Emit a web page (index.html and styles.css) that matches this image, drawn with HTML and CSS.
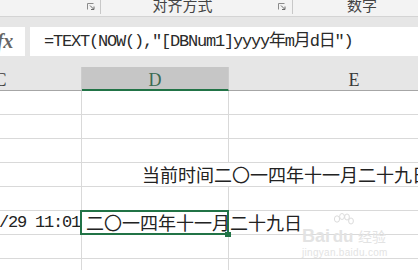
FILE: index.html
```html
<!DOCTYPE html>
<html lang="zh-CN">
<head>
<meta charset="utf-8">
<title>Excel</title>
<link rel="stylesheet" href="styles.css">
</head>
<body>
<div class="ribbon">
  <div class="grp g1">
    <svg class="launch" viewBox="0 0 8 7" width="8" height="7"><path d="M0.5 6.5V0.5H6.5" fill="none" stroke="#8a8a8a" stroke-width="1"/><path d="M3 2.5L6.5 6" fill="none" stroke="#6a6a6a" stroke-width="1"/><path d="M4 6.5H7V3.5" fill="none" stroke="#6a6a6a" stroke-width="1"/></svg>
  </div>
  <div class="grp g2">
    <span class="glabel">对齐方式</span>
    <svg class="launch" viewBox="0 0 8 7" width="8" height="7"><path d="M0.5 6.5V0.5H6.5" fill="none" stroke="#8a8a8a" stroke-width="1"/><path d="M3 2.5L6.5 6" fill="none" stroke="#6a6a6a" stroke-width="1"/><path d="M4 6.5H7V3.5" fill="none" stroke="#6a6a6a" stroke-width="1"/></svg>
  </div>
  <div class="grp g3">
    <span class="glabel wide">数字</span>
  </div>
</div>
<div class="band1"></div>
<div class="fbar">
  <div class="fx">fx</div>
  <div class="finput">=TEXT(NOW(),"[DBNum1]yyyy年m月d日")</div>
</div>
<div class="band2"></div>
<div class="sheet">
  <div class="c h">C</div><div class="c h sel">D</div><div class="c h">E</div>
  <div class="c"></div><div class="c"></div><div class="c"></div>
  <div class="c"></div><div class="c"></div><div class="c"></div>
  <div class="c"></div><div class="c"></div><div class="c"></div>
  <div class="c"></div><div class="c span2">当前时间二〇一四年十一月二十九日</div>
  <div class="c"></div><div class="c"></div><div class="c"></div>
  <div class="c num">2014/11/29 11:01</div><div class="c csel">二〇一四年十一月二十九日</div><div class="c"></div>
  <div class="c"></div><div class="c"></div><div class="c"></div>
  <div class="c"></div><div class="c"></div><div class="c"></div>
</div>
<div class="wm">
  <div class="wm-top">
    <span class="wm-bai">Bai</span>
    <span class="wm-du">
      <svg class="paw" viewBox="0 0 24 16" width="24" height="16"><ellipse cx="6" cy="6" rx="2.6" ry="3.2" fill="none" stroke="#dcdcdc"/><ellipse cx="11" cy="3.5" rx="2.4" ry="3" fill="none" stroke="#dcdcdc"/><ellipse cx="16" cy="4" rx="2.4" ry="3" fill="none" stroke="#dcdcdc"/><ellipse cx="20" cy="8" rx="2.4" ry="3" fill="none" stroke="#dcdcdc"/></svg>
      <span class="wm-dutext">du</span>
    </span>
    <span class="wm-jy">经验</span>
  </div>
  <div class="wm-url">jingyan.baidu.com</div>
</div>
</body>
</html>
```
FILE: styles.css
```css
html, body {
  margin: 0;
  padding: 0;
}
body {
  width: 418px;
  height: 270px;
  overflow: hidden;
  background: #e6e6e6;
  font-family: "Noto Sans CJK SC", sans-serif;
  position: relative;
}
.ribbon {
  height: 16px;
  background: #f3f3f3;
  border-bottom: 1px solid #d4d4d4;
  display: flex;
  align-items: flex-start;
  overflow: hidden;
}
.grp {
  box-sizing: border-box;
  height: 14px;
  display: flex;
  align-items: flex-start;
  border-right: 1px solid #c8c8c8;
  flex: none;
}
.g1 {
  width: 101px;
  justify-content: flex-end;
}
.g1 .launch {
  margin-right: 5px;
}
.g2 {
  width: 192px;
}
.g2 .launch {
  margin-right: 6px;
}
.g3 {
  width: 160px;
  border-right: none;
}
.launch {
  flex: none;
  margin-top: 3px;
}
.glabel {
  flex: 1;
  padding-right: 14px;
  font-size: 15px;
  line-height: 15px;
  margin-top: -3px;
  color: #444;
  text-align: center;
  white-space: nowrap;
}
.glabel.wide {
  flex: none;
  width: 138px;
  padding-right: 0;
}
.band1 {
  height: 10px;
}
.fbar {
  height: 29px;
  display: flex;
  gap: 5px;
}
.fx {
  flex: none;
  width: 40px;
  margin-left: -15px;
  background: #fff;
  font-family: "Liberation Serif", serif;
  font-style: italic;
  font-weight: bold;
  font-size: 20px;
  line-height: 29px;
  color: #666;
  text-align: center;
}
.finput {
  flex: 1;
  background: #fff;
  padding-left: 14px;
  font-family: "Liberation Mono", "Noto Sans CJK SC", monospace;
  font-size: 17px;
  letter-spacing: -1.2px;
  line-height: 29px;
  white-space: nowrap;
  color: #2a2a2a;
}
.band2 {
  height: 11px;
}
.sheet {
  margin-left: -80px;
  display: grid;
  grid-template-columns: 162px 147px 251px;
  grid-auto-rows: 24px;
  background: #fff;
}
.c {
  box-sizing: border-box;
  border-right: 1px solid #d9d9d9;
  border-bottom: 1px solid #d9d9d9;
  white-space: nowrap;
  font-size: 18px;
  line-height: 23px;
  color: #222;
}
.h {
  background: #e6e6e6;
  border-bottom-color: #a6a6a6;
  border-right-color: #cccccc;
  text-align: center;
  font-family: "Liberation Serif", serif;
  font-size: 18px;
  padding-top: 3px;
  line-height: 20px;
  color: #3a3a3a;
}
.h.sel {
  background: #c6c6c6;
  border-bottom: 2px solid #217346;
  color: #3b6a52;
}
.span2 {
  grid-column: span 2;
  padding-left: 60px;
  overflow: hidden;
}
.num {
  font-family: "Liberation Mono", monospace;
  font-size: 17px;
  letter-spacing: -1.2px;
  text-align: right;
  padding-right: 1px;
  overflow: hidden;
  direction: rtl;
  unicode-bidi: plaintext;
}
.csel {
  position: relative;
  padding-left: 4px;
  overflow: visible;
}
.csel::before {
  content: "";
  position: absolute;
  left: -2px;
  top: -1px;
  right: -1px;
  bottom: -1px;
  border: 2px solid #217346;
}
.csel::after {
  content: "";
  position: absolute;
  left: 143px;
  top: 21px;
  width: 6px;
  height: 5px;
  background: #217346;
}
.wm {
  position: absolute;
  left: 302px;
  top: 213px;
  color: #e3e3e3;
  font-family: "Liberation Sans", sans-serif;
}
.wm-top {
  display: flex;
  align-items: flex-end;
}
.wm-bai {
  font-size: 18px;
  font-weight: bold;
  line-height: 18px;
  margin-right: 1px;
}
.wm-du {
  display: flex;
  flex-direction: column;
  align-items: center;
}
.paw {
  display: block;
}
.wm-dutext {
  font-size: 17px;
  font-weight: bold;
  line-height: 16px;
}
.wm-jy {
  font-family: "Noto Sans CJK SC", sans-serif;
  font-size: 14px;
  line-height: 18px;
  margin-left: 3px;
}
.wm-url {
  font-size: 10px;
  line-height: 12px;
  margin-top: 2px;
  letter-spacing: 0.3px;
}
```
